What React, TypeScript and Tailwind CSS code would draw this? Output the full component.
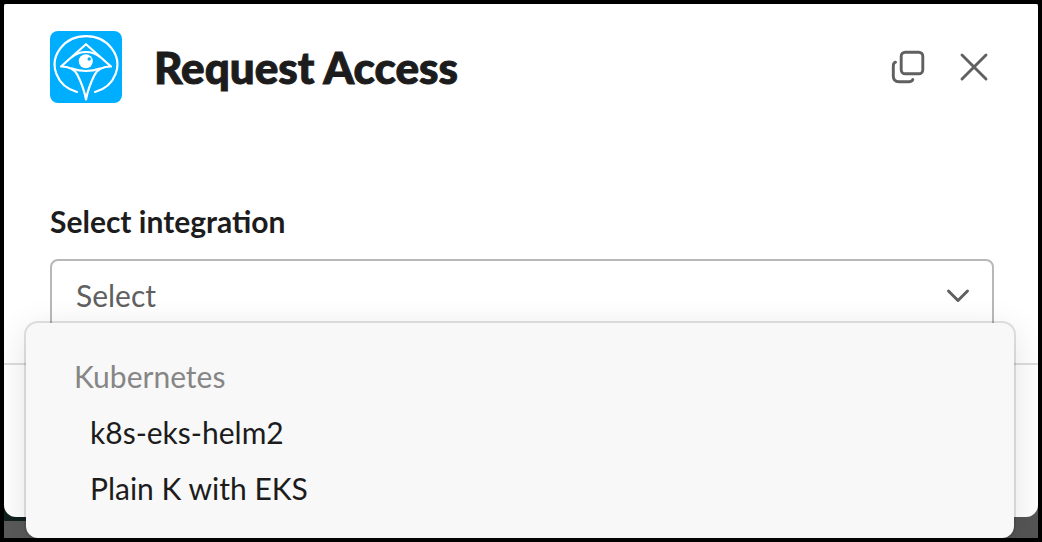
import { useState } from "react"

const groups = [
  { label: "Kubernetes", options: ["k8s-eks-helm2", "Plain K with EKS"] },
]

function Logo() {
  return (
    <svg
      className="size-18 shrink-0 rounded-lg bg-[#00aeff]"
      viewBox="0 0 72 72"
      fill="none"
      stroke="white"
      strokeWidth="2.2"
      strokeLinecap="round"
      strokeLinejoin="round"
      aria-hidden="true"
    >
      <path d="M27 61A31.3 28.5 0 1 1 45 61" />
      <path d="M11 35.5L36 13.2L61 35.5C53 35.5 47.5 38 44.5 44C41 51 38 58 36 68.5C34 58 31 51 27.5 44C24.5 38 19 35.5 11 35.5Z" />
      <path d="M22 26Q28 21 36 21Q44 21 50 26" />
      <path d="M22 37.5Q36 42.5 50 37.5" />
      <circle cx="35.8" cy="30.3" r="7" fill="white" stroke="none" />
      <circle cx="39.2" cy="28" r="1.7" fill="#00aeff" stroke="none" />
    </svg>
  )
}

function Header() {
  return (
    <header className="flex items-center justify-between">
      <div className="flex items-center gap-8">
        <Logo />
        <h1 className="text-[44px] leading-14 font-black [-webkit-text-stroke:1px_#1d1c1d]">
          Request Access
        </h1>
      </div>
      <div className="flex items-center gap-8 pr-0.5 text-[#616061]">
        <button type="button" aria-label="Open in new window">
          <svg
            className="size-9"
            viewBox="0 0 36 36"
            fill="none"
            stroke="currentColor"
            strokeWidth="2.9"
            strokeLinecap="round"
            aria-hidden="true"
          >
            <rect x="11.2" y="3.2" width="21.6" height="21.6" rx="4" />
            <path d="M5.5 13.2Q3.3 14 3.3 17V27Q3.3 32.7 9 32.7H19Q22 32.7 22.8 30.5" />
          </svg>
        </button>
        <button type="button" aria-label="Close">
          <svg
            className="size-8"
            viewBox="0 0 32 32"
            fill="none"
            stroke="currentColor"
            strokeWidth="2.9"
            strokeLinecap="round"
            aria-hidden="true"
          >
            <path d="M4 4L28 28M28 4L4 28" />
          </svg>
        </button>
      </div>
    </header>
  )
}

function IntegrationMenu({ onSelect }: { onSelect: (value: string) => void }) {
  return (
    <div className="absolute top-16 -right-5 -left-6 rounded-xl bg-[#f8f8f8] pt-[25px] pb-[22px] shadow-[0_0_0_2px_rgba(29,28,29,0.13),0_8px_36px_rgba(0,0,0,0.12)]">
      {groups.map((group) => (
        <div key={group.label}>
          <p className="px-12 leading-14 text-[#868686]">{group.label}</p>
          {group.options.map((option) => (
            <button
              key={option}
              type="button"
              className="block w-full px-16 text-left leading-14"
              onClick={() => onSelect(option)}
            >
              {option}
            </button>
          ))}
        </div>
      ))}
    </div>
  )
}

export default function App() {
  const [integration, setIntegration] = useState("")
  const [open, setOpen] = useState(true)

  function handleSelect(value: string) {
    setIntegration(value)
    setOpen(false)
  }

  return (
    <div className="flex min-h-screen flex-col bg-black p-1 font-['Lato',sans-serif] text-[30px] text-[#1d1c1d]">
      <div className="flex-1 bg-linear-to-r from-[#5a5a5a] to-[#555555]">
        <main className="relative rounded-t-xs rounded-b-xl bg-white">
          <div className="px-[46px] pt-[27px] pb-8">
            <Header />
            <label
              htmlFor="integration"
              className="mt-[98px] mb-[18px] block leading-10 font-bold"
            >
              Select integration
            </label>
            <div className="relative mr-[-2px]">
              <select
                id="integration"
                className="block h-18 w-full appearance-none rounded-lg border-2 border-[#b8b8b8] bg-white px-6 text-[#616061]"
                value={integration}
                onChange={(e) => handleSelect(e.target.value)}
              >
                <option value="">Select</option>
                {groups.map((group) => (
                  <optgroup key={group.label} label={group.label}>
                    {group.options.map((option) => (
                      <option key={option}>{option}</option>
                    ))}
                  </optgroup>
                ))}
              </select>
              <svg
                className="pointer-events-none absolute top-6 right-6 size-6"
                viewBox="0 0 24 24"
                fill="none"
                stroke="#616061"
                strokeWidth="3"
                strokeLinecap="round"
                strokeLinejoin="round"
                aria-hidden="true"
              >
                <path d="M2.5 8L12 17.5L21.5 8" />
              </svg>
              {open && <IntegrationMenu onSelect={handleSelect} />}
            </div>
          </div>
          <footer className="h-[154px] border-t-2 border-[#dddddd]" />
        </main>
        {/* page content showing behind the dialog's corner */}
        <div className="-mt-3 h-4 w-6 bg-[#10201f]" />
      </div>
    </div>
  )
}
